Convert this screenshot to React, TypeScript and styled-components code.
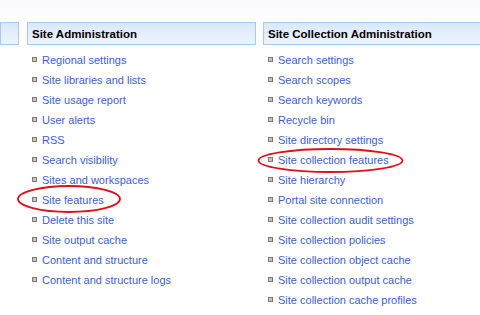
import React from 'react';
import styled, { createGlobalStyle } from 'styled-components';

const GlobalStyle = createGlobalStyle`
    html, body {
        margin: 0;
        padding: 0;
        background: #fff;
    }
    body {
        width: 480px;
        height: 315px;
        overflow: hidden;
        font-family: "Liberation Sans", Arial, sans-serif;
    }
`;

const siteAdmin = [
    'Regional settings',
    'Site libraries and lists',
    'Site usage report',
    'User alerts',
    'RSS',
    'Search visibility',
    'Sites and workspaces',
    'Site features',
    'Delete this site',
    'Site output cache',
    'Content and structure',
    'Content and structure logs',
];

const collectionAdmin = [
    'Search settings',
    'Search scopes',
    'Search keywords',
    'Recycle bin',
    'Site directory settings',
    'Site collection features',
    'Site hierarchy',
    'Portal site connection',
    'Site collection audit settings',
    'Site collection policies',
    'Site collection object cache',
    'Site collection output cache',
    'Site collection cache profiles',
];

export default function App() {
    return (
        <Page>
            <GlobalStyle />
            <TopStrip />
            <Columns>
                <Section>
                    <Header />
                </Section>
                <Section>
                    <Header>Site Administration</Header>
                    <LinkList>
                        {siteAdmin.map((item) => (
                            <LinkItem key={item}>
                                <Bullet />
                                <LinkText href="#">{item}</LinkText>
                            </LinkItem>
                        ))}
                    </LinkList>
                </Section>
                <Section>
                    <Header>Site Collection Administration</Header>
                    <LinkList>
                        {collectionAdmin.map((item) => (
                            <LinkItem key={item}>
                                <Bullet />
                                <LinkText href="#">{item}</LinkText>
                            </LinkItem>
                        ))}
                    </LinkList>
                </Section>
            </Columns>
            <Marks width="480" height="315" viewBox="0 0 480 315">
                <ellipse cx="69" cy="199" rx="51" ry="13" fill="none" stroke="#e0101a" strokeWidth="1.8" />
                <ellipse cx="330.5" cy="160.5" rx="72" ry="11.5" fill="none" stroke="#e0101a" strokeWidth="1.8" />
            </Marks>
        </Page>
    );
}

const Page = styled.div`
    position: relative;
    width: 480px;
    height: 315px;
    overflow: hidden;
    background: #fff;
`;

const TopStrip = styled.div`
    height: 22px;
    background: linear-gradient(to bottom, #f8f9fc 0%, #fdfdfe 70%, #ffffff 100%);
`;

const Columns = styled.div`
    display: grid;
    grid-template-columns: 19px 229px 230px;
    column-gap: 8px;
    & > :nth-child(3) {
        margin-left: -1px;
    }
`;

const Section = styled.div`
    display: flex;
    flex-direction: column;
`;

const Header = styled.div`
    box-sizing: border-box;
    height: 23px;
    padding: 0 0 0 4px;
    display: flex;
    align-items: center;
    font-family: "Liberation Sans", Arial, sans-serif;
    font-size: 11.5px;
    font-weight: 700;
    color: #000;
    border: 1px solid #a9c8f2;
    background: linear-gradient(to bottom, #dae7fb 0%, #e7effc 60%, #eef4fd 100%);
`;

const LinkList = styled.ul`
    list-style: none;
    margin: 0;
    padding: 5px 0 0 5px;
`;

const LinkItem = styled.li`
    display: flex;
    align-items: center;
    height: 20px;
`;

const Bullet = styled.span`
    box-sizing: border-box;
    width: 5px;
    height: 5px;
    margin-right: 5px;
    margin-top: -1px;
    border: 1px solid #7a7a7a;
    background: #c4c4c4;
`;

const LinkText = styled.a`
    font-family: "Liberation Sans", Arial, sans-serif;
    font-size: 11px;
    color: #3b5fcf;
    text-decoration: none;
    white-space: nowrap;
`;

const Marks = styled.svg`
    position: absolute;
    left: 0;
    top: 0;
    pointer-events: none;
`;
